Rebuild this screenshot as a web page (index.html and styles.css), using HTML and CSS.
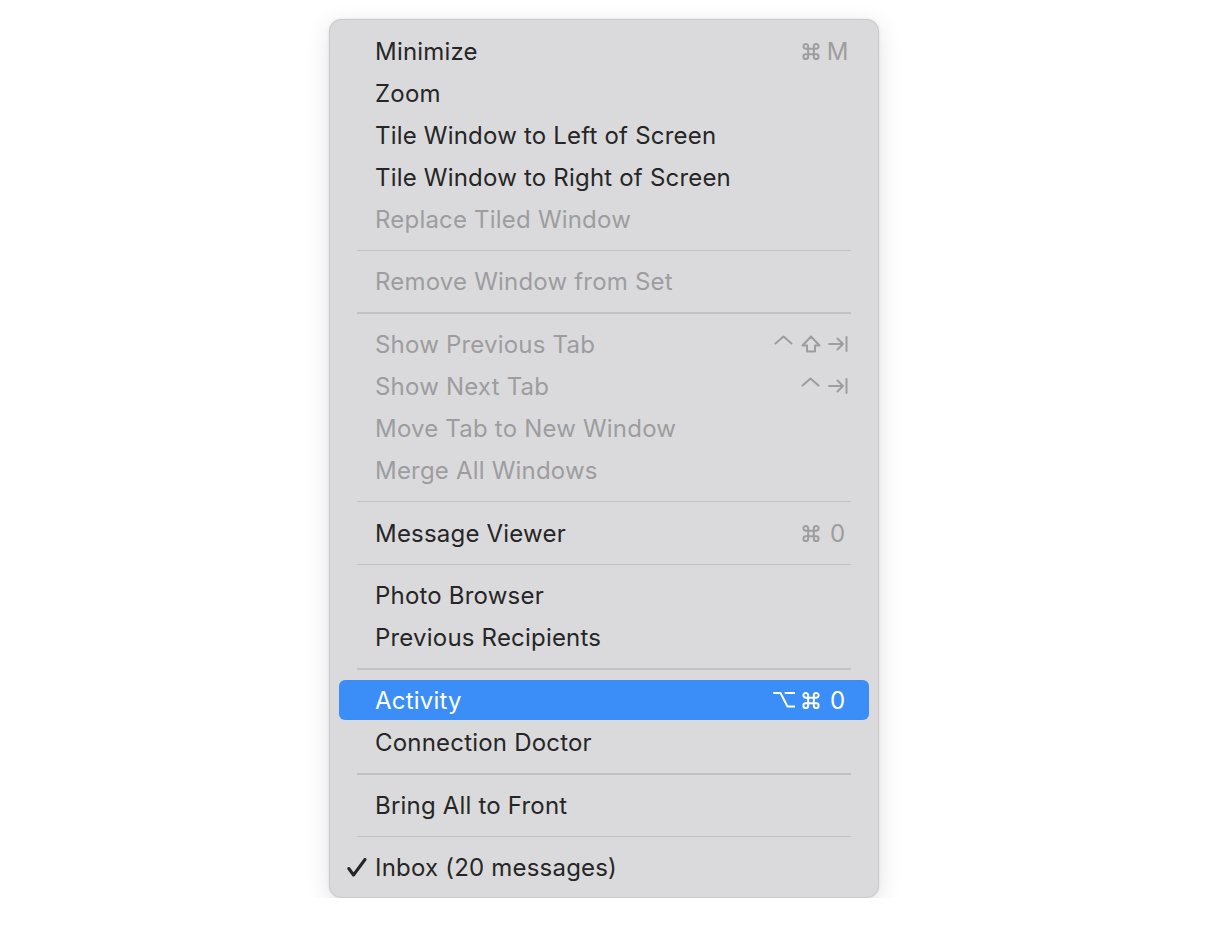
FILE: index.html
```html
<!DOCTYPE html>
<html>
<head>
<meta charset="utf-8">
<link rel="stylesheet" href="styles.css">
</head>
<body>
<div class="menu">
  <div class="item"><span class="label">Minimize</span><span class="keys"><span class="k"><svg class="ico cmd" width="20" height="19" viewBox="0 0 20 20"><path d="M7 7V4.5A2.5 2.5 0 1 0 4.5 7H15.5A2.5 2.5 0 1 0 13 4.5V15.5A2.5 2.5 0 1 0 15.5 13H4.5A2.5 2.5 0 1 0 7 15.5Z"/></svg></span><span class="k">M</span></span></div>
  <div class="item"><span class="label">Zoom</span></div>
  <div class="item"><span class="label">Tile Window to Left of Screen</span></div>
  <div class="item"><span class="label">Tile Window to Right of Screen</span></div>
  <div class="item disabled"><span class="label">Replace Tiled Window</span></div>
  <div class="sep"></div>
  <div class="item disabled"><span class="label">Remove Window from Set</span></div>
  <div class="sep"></div>
  <div class="item disabled"><span class="label">Show Previous Tab</span><span class="keys"><span class="k"><svg class="ico" width="19" height="20" viewBox="0 0 19 20"><path d="M1.5 9.5L9.5 2.5L17.5 9.5"/></svg></span><span class="k"><svg class="ico" width="20" height="20" viewBox="0 0 20 20"><path d="M10 2.5L18.5 11.5H14V17.5H6V11.5H1.5Z"/></svg></span><span class="k"><svg class="ico" width="20" height="20" viewBox="0 0 20 20"><path d="M1 10H15M9.5 4.5L15 10L9.5 15.5M18.5 3V17"/></svg></span></span></div>
  <div class="item disabled"><span class="label">Show Next Tab</span><span class="keys"><span class="k"><svg class="ico" width="19" height="20" viewBox="0 0 19 20"><path d="M1.5 9.5L9.5 2.5L17.5 9.5"/></svg></span><span class="k"><svg class="ico" width="20" height="20" viewBox="0 0 20 20"><path d="M1 10H15M9.5 4.5L15 10L9.5 15.5M18.5 3V17"/></svg></span></span></div>
  <div class="item disabled"><span class="label">Move Tab to New Window</span></div>
  <div class="item disabled"><span class="label">Merge All Windows</span></div>
  <div class="sep"></div>
  <div class="item"><span class="label">Message Viewer</span><span class="keys"><span class="k"><svg class="ico cmd" width="20" height="19" viewBox="0 0 20 20"><path d="M7 7V4.5A2.5 2.5 0 1 0 4.5 7H15.5A2.5 2.5 0 1 0 13 4.5V15.5A2.5 2.5 0 1 0 15.5 13H4.5A2.5 2.5 0 1 0 7 15.5Z"/></svg></span><span class="k">0</span></span></div>
  <div class="sep"></div>
  <div class="item"><span class="label">Photo Browser</span></div>
  <div class="item"><span class="label">Previous Recipients</span></div>
  <div class="sep"></div>
  <div class="item active"><span class="label">Activity</span><span class="keys"><span class="k"><svg class="ico" width="22" height="20" viewBox="0 0 22 20"><path d="M1 3H7.5L14.5 16.5H21.5M12.5 3H21.5"/></svg></span><span class="k"><svg class="ico cmd" width="20" height="19" viewBox="0 0 20 20"><path d="M7 7V4.5A2.5 2.5 0 1 0 4.5 7H15.5A2.5 2.5 0 1 0 13 4.5V15.5A2.5 2.5 0 1 0 15.5 13H4.5A2.5 2.5 0 1 0 7 15.5Z"/></svg></span><span class="k">0</span></span></div>
  <div class="item"><span class="label">Connection Doctor</span></div>
  <div class="sep"></div>
  <div class="item"><span class="label">Bring All to Front</span></div>
  <div class="sep"></div>
  <div class="item"><svg class="check" width="20" height="20" viewBox="0 0 20 20"><path d="M1.8 10.5L6.5 17L18 1.5"/></svg><span class="label">Inbox (20 messages)</span></div>
</div>
</body>
</html>
```
FILE: styles.css
```css
html, body {
  margin: 0;
  padding: 0;
  background: #ffffff;
}
body {
  padding: 19px 0 0 329px;
  font-family: Inter, "Noto Sans", "DejaVu Sans", sans-serif;
}
.menu {
  box-sizing: border-box;
  width: 550px;
  display: flex;
  flex-direction: column;
  background: #dadadc;
  border: 1px solid #c9c9cb;
  border-radius: 12px;
  padding: 10px 0 8px 0;
  box-shadow: 0 6px 24px rgba(0,0,0,0.12), 0 0 3px rgba(0,0,0,0.08);
}
.item {
  position: relative;
  height: 40px;
  margin: 1px 9px;
  padding: 0 18px 0 36px;
  display: flex;
  align-items: center;
  border-radius: 6px;
  color: #262626;
  font-size: 24px;
  letter-spacing: 0.2px;
}
.item.disabled {
  color: #9d9d9f;
}
.item.active {
  background: #3b8ef7;
  color: #ffffff;
}
.label {
  flex: 1;
}
.check {
  position: absolute;
  left: 8px;
  top: 10px;
  fill: none;
  stroke: #262626;
  stroke-width: 3;
  stroke-linecap: round;
  stroke-linejoin: round;
}
.keys {
  display: flex;
  color: #9d9d9f;
  letter-spacing: 0;
}
.item.active .keys {
  color: #ffffff;
}
.k {
  width: 27px;
  height: 30px;
  display: flex;
  align-items: center;
  justify-content: center;
  font-size: 24px;
}
.ico {
  display: block;
  fill: none;
  stroke: currentColor;
  stroke-width: 2;
  stroke-linecap: round;
  stroke-linejoin: round;
}
.ico.cmd {
  stroke-width: 2.1;
}
.sep {
  height: 20.7px;
  margin: 0 27px;
  display: flex;
  align-items: center;
  flex-shrink: 0;
}
.sep::before {
  content: "";
  display: block;
  width: 100%;
  height: 1.5px;
  background: #c2c2c4;
}
```
